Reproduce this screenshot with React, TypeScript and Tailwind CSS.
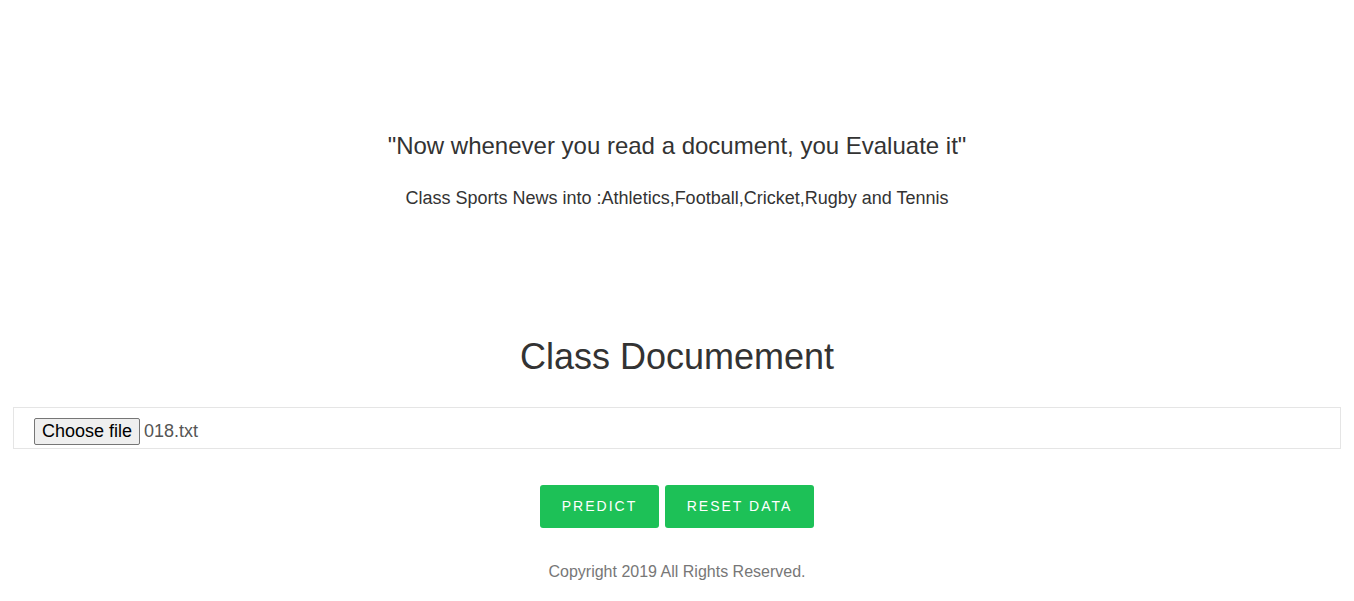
export default function App() {
  return (
    <div className="min-h-[601px] bg-white text-[#333] font-['Liberation_Sans',Arial,sans-serif]">
      <section className="pt-[129px] text-center">
        <p className="text-[24px] leading-[34px]">"Now whenever you read a document, you Evaluate it"</p>
        <p className="mt-[23px] text-[18px] leading-[24px]">
          Class Sports News into :Athletics,Football,Cricket,Rugby and Tennis
        </p>
      </section>

      <section className="mt-[125px] px-[13px] text-center">
        <h2 className="text-[36px] leading-[44px]">Class Documement</h2>
        <div className="mt-[28px] h-[42px] border border-[#e5e5e5] flex items-center pl-[20px] pt-[6px]">
          <span className="h-[27px] px-[7px] bg-[#efefef] border border-[#767676] rounded-[2px] text-[18px] leading-[24px] text-black">
            Choose file
          </span>
          <span className="ml-[4px] text-[18px] text-[#555]">018.txt</span>
        </div>
        <div className="mt-[36px] flex justify-center gap-[6px]">
          <button className="h-[43px] w-[119px] rounded-[3px] bg-[#1dc157] text-white text-[14px] tracking-[2px]">
            PREDICT
          </button>
          <button className="h-[43px] w-[149px] rounded-[3px] bg-[#1dc157] text-white text-[14px] tracking-[2px]">
            RESET DATA
          </button>
        </div>
        <p className="mt-[32px] text-[16px] text-[#777]">Copyright 2019 All Rights Reserved.</p>
      </section>
    </div>
  );
}
